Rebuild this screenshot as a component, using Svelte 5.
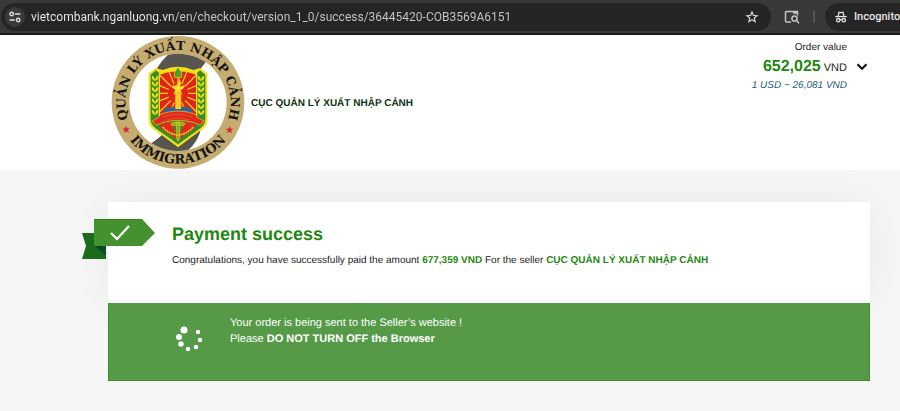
<script>
  const url = 'vietcombank.nganluong.vn/en/checkout/version_1_0/success/36445420-COB3569A6151';
  const seller = 'CỤC QUẢN LÝ XUẤT NHẬP CẢNH';
  const rays = Array.from({ length: 16 }, (_, i) => i * 22.5);
  const leaves = [0, 1, 2, 3, 4, 5, 6];
  const dots = [
    { x: 10, y: 6, r: 3.5 },
    { x: 5, y: 13, r: 3 },
    { x: 7, y: 20, r: 2.7 },
    { x: 14, y: 25, r: 2.3 },
    { x: 22, y: 23, r: 2.3 },
    { x: 26, y: 16, r: 2.2 },
    { x: 24, y: 8, r: 2.2 }
  ];
</script>

<div class="browser">
  <div class="omnibox">
    <button class="site" aria-label="View site information">
      <svg width="12" height="12" viewBox="0 0 12 12" fill="none" stroke="#dedede" stroke-width="1.4" stroke-linecap="round">
        <circle cx="2.7" cy="3" r="1.7" /><path d="M6.4 3h4.4M1 9h4.4" /><circle cx="9.2" cy="9" r="1.7" />
      </svg>
    </button>
    <input class="url" type="text" aria-label="Address" value={url} spellcheck="false" />
    <button class="plain" aria-label="Bookmark this page">
      <svg width="14" height="14" viewBox="0 0 14 14" fill="none" stroke="#cfcfcf" stroke-width="1.3" stroke-linejoin="miter">
        <path d="M7 2 8.4 5.4 12 5.7 9.3 8.1 10.1 11.7 7 9.8 3.9 11.7 4.7 8.1 2 5.7 5.6 5.4Z" />
      </svg>
    </button>
  </div>
  <button class="plain" aria-label="Search this page">
    <svg width="16" height="14" viewBox="0 0 16 14" fill="none" stroke="#c4c4c4" stroke-width="1.5">
      <path d="M7 12H2.5a1 1 0 0 1-1-1V2.5a1 1 0 0 1 1-1H13.5V5.5" />
      <path d="M9 2.5h5" stroke-width="2.5" />
      <circle cx="10.5" cy="8.5" r="2.6" /><path d="m12.5 10.5 2.5 2.7" />
    </svg>
  </button>
  <span class="divider"></span>
  <button class="incognito">
    <svg width="12" height="12" viewBox="0 0 12 12" fill="none" stroke="#e3e3e3" stroke-width="1.3">
      <path d="M3.2 5 4 1.2 6 1.7 8 1.2 8.8 5" /><path d="M.3 5.6h11.4" />
      <circle cx="3.2" cy="9.2" r="1.7" /><circle cx="8.8" cy="9.2" r="1.7" /><path d="M4.9 8.8q1.1-.6 2.2 0" />
    </svg>
    <span>Incognito</span>
  </button>
</div>

<header>
  <div class="container head">
    <div class="brand">
      <svg class="logo" width="134" height="134" viewBox="33 18 402 402" role="img" aria-label="Immigration Department">
        <defs>
          <path id="arc-top" d="M145 348A158 158 0 1 1 323 348" />
          <path id="arc-bottom" d="M50 217A184 184 0 0 0 418 217" />
          <clipPath id="inner"><circle cx="234" cy="217" r="146" /></clipPath>
          <clipPath id="field"><path d="M178 132Q234 112 290 132V258Q234 238 178 258Z" /></clipPath>
        </defs>
        <circle cx="234" cy="217" r="199" fill="#c5ac70" />
        <circle cx="234" cy="217" r="146" fill="#fff" />
        <g clip-path="url(#inner)" fill="#57554d">
          <path d="M162 132Q180 92 214 66H340L290 132Z" />
          <path d="M140 346Q185 325 205 290H304Q296 340 248 374H170Z" />
        </g>
        <g font-family="'DejaVu Serif', serif" font-weight="700" fill="#151515" text-anchor="middle">
          <text font-size="37"><textPath href="#arc-top" startOffset="50%">QUẢN LÝ XUẤT NHẬP CẢNH</textPath></text>
          <text font-size="39"><textPath href="#arc-bottom" startOffset="50%">IMMIGRATION</textPath></text>
        </g>
        <g fill="#d8262b">
          <path d="M78 287 81 295 89 294 83 300 87 308 79 304 72 309 74 301 67 296 75 295Z" />
          <path d="M389 288 392 296 400 296 393 302 396 310 388 305 381 310 384 302 377 296 386 296Z" />
        </g>
        <path d="M146 130 168 114 188 120Q234 100 280 120L300 114 322 130V270Q322 288 307 298L252 338 234 352 216 338 161 298Q146 288 146 270Z" fill="#f4df15" />
        <path d="M152 134 168 121 178 130V262L240 250 290 262V130L300 121 316 134V268Q315 284 303 293L234 343 165 293Q153 284 152 268Z" fill="#368c2c" />
        <path d="M178 132Q234 112 290 132V258H178Z" fill="#e3231b" />
        <g clip-path="url(#field)" stroke="#f8de17" stroke-width="3.5">
          {#each rays as angle}
            <path d="M234 160V82" transform="rotate({angle} 234 190)" />
          {/each}
        </g>
        <path d="M178 132Q234 112 290 132V258M178 258V132" fill="none" stroke="#f4df15" stroke-width="4" />
        {#each leaves as i}
          <g fill="#e9e21a" transform="translate(0 {i * 17})">
            <path d="M165 153q-12-4-9-16 9 4 9 16q0-12 9-16 3 12-9 16" />
            <path d="M303 153q-12-4-9-16 9 4 9 16q0-12 9-16 3 12-9 16" />
          </g>
        {/each}
        <path d="M223 142V128l11-17 11 17v14Z" fill="#4b9d2d" stroke="#f4df15" stroke-width="2" />
        <path d="M226 182h17v58h-17Z" fill="#f6ce25" stroke="#efac20" stroke-width="2" />
        <path d="M230 166Q236 151 237 144 247 160 240 170L255 165Q251 180 241 181L247 194 234 186 221 194 226 180 212 169Z" fill="#ffe22b" stroke="#ee781e" stroke-width="1.5" />
        <path d="M190 255V241l9-3 1-8 11 5 9-7 6 9h17l5-9 10 7 11-5 2 8 8 3v14q-45-17-89 0Z" fill="#2667a4" />
        <path d="M157 273 175 263 181 253Q234 233 287 253L292 263 312 273 301 286 285 279Q234 263 184 279L168 286Z" fill="#e3291d" stroke="#f4d419" stroke-width="2" />
        <path d="M190 261Q234 246 278 261M202 270Q234 261 266 270" fill="none" stroke="#d99a1b" stroke-width="2" stroke-dasharray="3 2" />
        <path d="M180 282 216 275 225 307 234 318 243 307 252 275 289 282 283 296 234 329 184 296Z" fill="#e3291d" />
        <path d="M230 276h9v48l-5 10-4-10ZM213 280q21-8 42 0l-4 7q-17-5-34 0Z" fill="#8da724" stroke="#e8d41c" stroke-width="2" />
        <path d="M188 291q20 22 45 24M280 291q-20 22-45 24" fill="none" stroke="#e8d41c" stroke-width="5" stroke-dasharray="6 2" />
      </svg>
      <strong>{seller}</strong>
    </div>
    <div class="order">
      <div class="amounts">
        <span>Order value</span>
        <span class="total"><b>652,025</b> VND</span>
        <em>1 USD ~ 26,081 VND</em>
      </div>
      <button class="toggle" aria-label="Show order details">
        <svg width="12" height="8" viewBox="0 0 12 8" fill="none" stroke="#151515" stroke-width="2.2"><path d="m1.5 1.3 4.5 4.5 4.5-4.5" /></svg>
      </button>
    </div>
  </div>
</header>

<main class="container">
  <section class="card">
    <svg class="ribbon" width="74" height="42" viewBox="0 0 74 42" aria-hidden="true">
      <path d="M0 14H24V40H0L4 27Z" fill="#1c6b1b" />
      <path d="M13 27H24V37Z" fill="#0c4b2a" />
      <path d="M12 0H60L73 14 60 27H12Z" fill="#45912f" />
      <path d="M12 .5H60" stroke="#238611" />
      <path d="m29 14 6 6L47 7" fill="none" stroke="#fff" stroke-width="2.2" />
    </svg>
    <h1>Payment success</h1>
    <p>Congratulations, you have successfully paid the amount <b>677,359 VND</b> For the seller <b>{seller}</b></p>
  </section>
  <section class="notice" role="status">
    <svg width="30" height="30" viewBox="0 0 30 30" fill="#fff" aria-hidden="true">
      {#each dots as d}<circle cx={d.x} cy={d.y} r={d.r} />{/each}
    </svg>
    <p>Your order is being sent to the Seller’s website !<br />Please <b>DO NOT TURN OFF the Browser</b></p>
  </section>
</main>

<style>
  :global(body) {
    margin: 0;
    background: #f6f6f6;
    color: #222;
    font-family: 'Liberation Sans', Arial, sans-serif;
    text-rendering: geometricPrecision;
    overflow-x: hidden;
  }
  button {
    border: 0;
    padding: 0;
    background: none;
    font: inherit;
    cursor: pointer;
  }
  svg {
    display: block;
    flex: none;
  }
  .browser {
    display: flex;
    align-items: center;
    height: 33px;
    padding-left: 1px;
    border-bottom: 2px solid #191b19;
    background: #393939;
    font-family: Roboto, sans-serif;
    overflow: hidden;
  }
  .omnibox {
    flex: 1;
    display: flex;
    align-items: center;
    gap: 6px;
    height: 28px;
    padding: 0 12px 0 4px;
    border-radius: 14px;
    background: #252525;
  }
  .site {
    display: grid;
    place-items: center;
    width: 20px;
    height: 20px;
    border-radius: 50%;
    background: #3a3a3a;
  }
  .url {
    flex: 1;
    min-width: 0;
    padding: 0;
    border: 0;
    outline: 0;
    background: linear-gradient(90deg, #f0f0f0 142px, #cacaca 142px);
    background-clip: text;
    color: transparent;
    font: 400 12px/20px Roboto, sans-serif;
  }
  .browser > .plain {
    margin: 0 13px;
  }
  .divider {
    width: 2px;
    height: 12px;
    margin-right: 10px;
    background: #555;
  }
  .incognito {
    display: flex;
    align-items: center;
    gap: 7px;
    width: 75px;
    height: 28px;
    padding-left: 10px;
    border-radius: 14px 0 0 14px;
    background: #252525;
    color: #e6e6e6;
    font-size: 11px;
    font-weight: 500;
  }
  .container {
    margin: 0 30px 0 108px;
  }
  header {
    background: #fff;
  }
  .head {
    display: flex;
    justify-content: space-between;
    padding: 1px 0 0 3px;
  }
  .brand {
    display: flex;
    align-items: center;
    gap: 6px;
    color: #0d3312;
    font-size: 10px;
  }
  .order {
    display: flex;
    align-items: center;
    align-self: flex-start;
    gap: 9px;
    padding: 4px 2px 0 0;
  }
  .amounts {
    display: flex;
    flex-direction: column;
    align-items: flex-end;
    font-size: 10px;
    line-height: 16px;
  }
  .total {
    font-size: 11px;
    line-height: 22px;
  }
  .total b {
    font-size: 16px;
  }
  .amounts em {
    line-height: 14px;
  }
  b,
  h1 {
    color: #1f880f;
  }
  em {
    color: #275c80;
  }
  main {
    padding: 32px 0 30px;
  }
  .card {
    position: relative;
    padding: 20px 20px 34px 64px;
    background: #fff;
    box-shadow: 0 0 40px rgba(0, 0, 0, 0.06);
  }
  .ribbon {
    position: absolute;
    left: -26px;
    top: 17px;
  }
  h1 {
    margin: 0;
    font-size: 18px;
    line-height: 24px;
  }
  p {
    margin: 0;
  }
  .card p {
    padding-top: 7px;
    font-size: 10px;
    line-height: 16px;
  }
  .notice {
    position: relative;
    display: flex;
    align-items: flex-start;
    gap: 26px;
    padding: 11px 20px 26px 65px;
    border: 1px solid #3b9123;
    border-top-color: #569a48;
    background: #569a48;
    color: #fff;
    font-size: 11px;
    line-height: 16px;
  }
  .notice svg {
    margin-top: 9px;
  }
  .notice b {
    color: inherit;
  }
</style>
